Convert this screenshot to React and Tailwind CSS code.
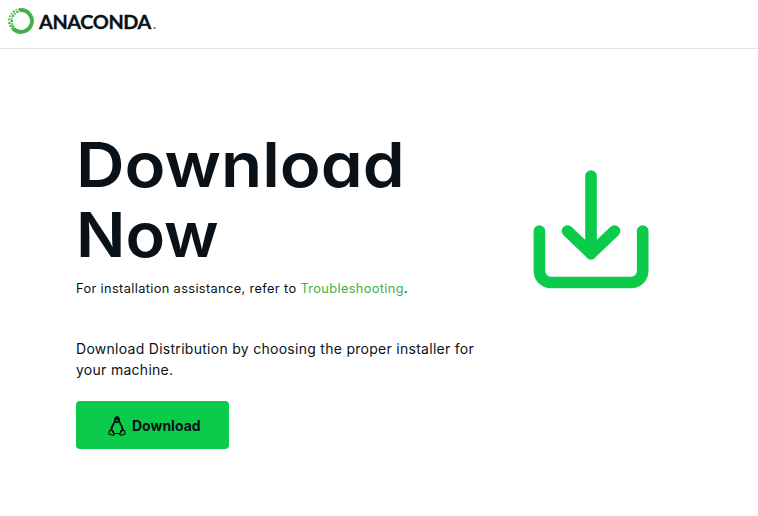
const specks = [
  [11.6, 1.6, 1.4], [8.2, 1.8, 0.9], [9.4, 3.9, 1.2], [5.9, 3.6, 1.2], [7, 6, 0.9],
  [3.6, 5.6, 0.9], [4.9, 7.8, 1.3], [1.9, 8.2, 1], [3.8, 10.4, 0.8], [1.2, 11.4, 1.1],
  [3.8, 12.9, 1.3], [1.4, 15, 1.2], [4.1, 16, 1], [2.5, 18, 1.2], [5.1, 18.5, 1.3],
  [4.4, 20.8, 1.3],
];

function Ring() {
  return (
    <svg width="26" height="26" viewBox="0 0 26 26" className="shrink-0">
      <path d="M11.4 2.2 A10.9 10.9 0 1 1 5.2 20.6" fill="none" stroke="#43b049" strokeWidth="3.9" />
      {specks.map(([x, y, r]) => (
        <circle key={`${x}-${y}`} cx={x} cy={y} r={r} fill="#43b049" />
      ))}
    </svg>
  );
}

function Penguin() {
  return (
    <svg width="18" height="20" viewBox="0 0 18 20" className="mt-px shrink-0">
      <path d="M6 4.2 C6 1.5 7.2.3 9 .3 S12 1.5 12 4.2 C12 7.2 15.8 9.6 15.8 15 L12.5 18 H5.5 L2.2 15 C2.2 9.6 6 7.2 6 4.2Z" fill="#050f10" />
      <path d="M7 6.4 L9 7.2 L11 6.4 C11.5 8.8 13.6 10.5 13.6 13.7 C11.8 14.1 12 16 11.6 17 H6.4 C6.2 15.6 5.7 14 4.4 13.7 C4.4 10.8 6.6 8.7 7 6.4Z" fill="#0dcb4a" />
      <path d="M7.4 4.6 L9 4 L10.6 4.6 L9 5.4Z" fill="#0dcb4a" />
      <path d="M3.3 14 L6.5 18.4 L5.2 19.4 L.9 18 L1.2 15.1Z M14.7 14 L11.5 18.4 L12.8 19.4 L17.1 18 L16.8 15.1Z" fill="#0dcb4a" stroke="#050f10" strokeWidth="1.1" strokeLinejoin="round" />
    </svg>
  );
}

export default function App() {
  return (
    <div className="h-[516px] w-[758px] overflow-hidden bg-white font-['Inter',sans-serif] text-[#0a1117]">
      <header className="flex h-[49px] items-start border-b border-[#dfe6ed] pl-2 pt-2">
        <Ring />
        <div className="ml-[5px] mt-0.5 flex items-baseline font-['Lato',sans-serif] text-[19.5px] leading-6 font-bold">
          <span className="w-[113px] origin-left scale-x-[1.02] tracking-[-0.4px] [-webkit-text-stroke:0.3px_#0a1117]">ANACONDA</span>
          <span className="ml-px text-[13px] text-[#777]">.</span>
        </div>
      </header>
      <main className="flex pl-[76px]">
        <section className="w-[410px] shrink-0 pt-[81px]">
          <h1 className="text-[62px] leading-[70px] font-semibold [font-feature-settings:'cv11']">
            <span className="block w-fit origin-left scale-x-[1.085]">Download</span>
            <span className="block w-fit origin-left scale-x-[1.05]">Now</span>
          </h1>
          <p className="mt-2 text-[12.8px] leading-[21px] tracking-[0.36px] whitespace-nowrap">
            For installation assistance, refer to <a className="text-[#43b049]">Troubleshooting</a>.
          </p>
          <p className="mt-[39px] text-[14px] leading-[21px] tracking-[0.28px] whitespace-nowrap">
            Download Distribution by choosing the proper installer for<br />your machine.
          </p>
          <button className="mt-[21px] flex h-12 w-[153px] items-center rounded-[4px] bg-[#0dcb4a] pl-8 text-[14px] font-bold">
            <Penguin />
            <span className="ml-[6px]">Download</span>
          </button>
        </section>
        <svg width="116" height="119" viewBox="0 0 116 119" className="mt-[121px] ml-[47px]" fill="none" stroke="#0dcb4a" strokeWidth="11.6" strokeLinecap="round" strokeLinejoin="round">
          <path d="M6.4 61 V101 A11.5 11.5 0 0 0 17.9 112.5 H98.2 A11.5 11.5 0 0 0 109.7 101 V61" />
          <path d="M58 6 V84 M34.5 61 L58 83.5 L81.5 61" />
        </svg>
      </main>
    </div>
  );
}
